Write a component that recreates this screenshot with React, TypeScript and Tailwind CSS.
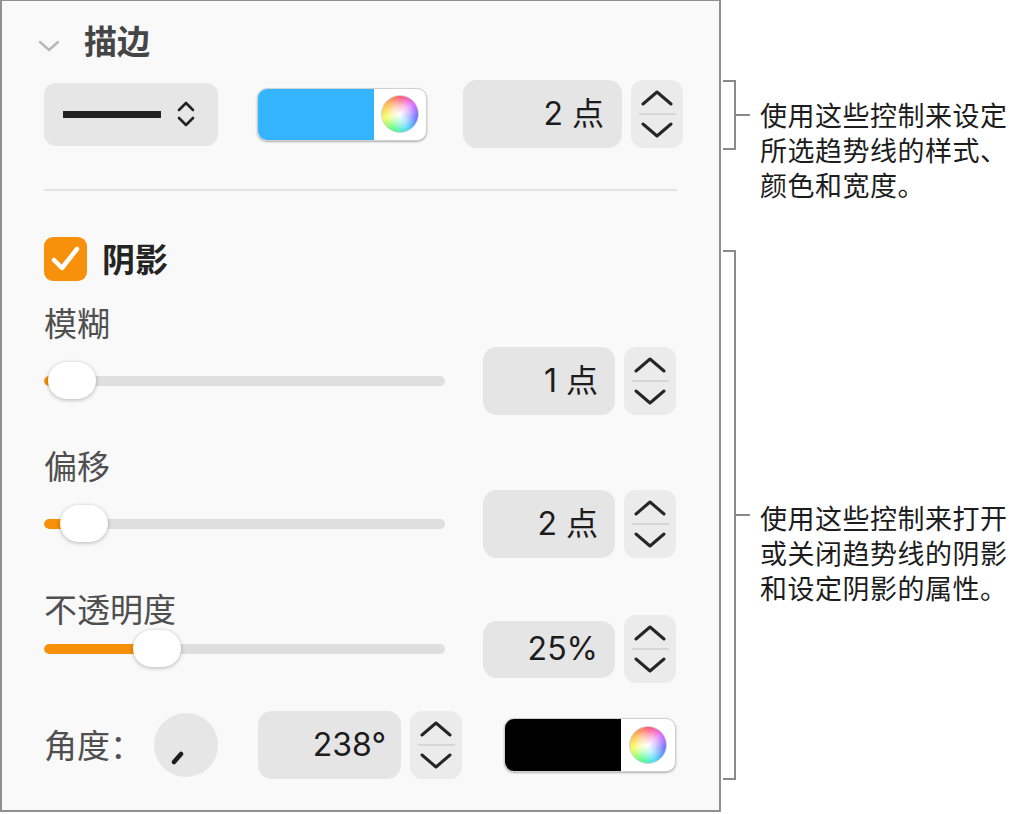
import React from "react";

const cjk = "font-['Noto_Sans_CJK_SC',sans-serif]";
const num = "font-['Inter','Noto_Sans_CJK_SC',sans-serif]";

const Stepper: React.FC<{ className?: string }> = ({ className = "" }) => (
  <div
    className={`w-[52px] h-[68px] shrink-0 rounded-[12px] bg-[#ebebeb] flex flex-col items-center justify-center gap-[7px] ${className}`}
  >
    <svg width="34" height="17" viewBox="0 0 34 17">
      <path d="M3 15 L17 3 L31 15" fill="none" stroke="#262626" strokeWidth="3" strokeLinecap="round" strokeLinejoin="round" />
    </svg>
    <div className="w-[37px] h-[2px] bg-[#d6d6d6]" />
    <svg width="34" height="17" viewBox="0 0 34 17">
      <path d="M3 2 L17 14 L31 2" fill="none" stroke="#262626" strokeWidth="3" strokeLinecap="round" strokeLinejoin="round" />
    </svg>
  </div>
);

const Field: React.FC<{ value: string; className: string }> = ({ value, className }) => (
  <div
    className={`shrink-0 rounded-[14px] bg-[#e5e5e5] flex items-center justify-end text-[32px] text-[#1c1c1c] ${num} ${className}`}
  >
    {value}
  </div>
);

const Wheel: React.FC = () => (
  <div className="w-[38px] h-[38px] rounded-full border border-[#d4d4d4] bg-[image:radial-gradient(circle,#ffffff_0%,rgba(255,255,255,0.6)_35%,rgba(255,255,255,0)_72%),conic-gradient(from_0deg,#ff4d6a,#e05cff,#5a6bff,#3fd6ff,#4dff7a,#f4ff4a,#ffb03a,#ff4d6a)]" />
);

const ColorWell: React.FC<{ color: string; className: string }> = ({ color, className }) => (
  <div
    className={`flex shrink-0 rounded-[10px] overflow-hidden bg-white border border-[#d0d0d0] shadow-[0_1px_2px_rgba(0,0,0,0.3)] ${className}`}
  >
    <div className={`w-[116px] h-full ${color}`} />
    <div className="flex-1 flex items-center justify-center">
      <Wheel />
    </div>
  </div>
);

const Slider: React.FC<{ fill: string; thumb: string }> = ({ fill, thumb }) => (
  <div className="relative w-[401px] h-[40px] shrink-0 flex items-center">
    <div className="w-full h-[10px] rounded-full bg-[#dfdfdf] overflow-hidden">
      <div className={`h-full rounded-full bg-[#f68f0a] ${fill}`} />
    </div>
    <div
      className={`absolute top-[1px] w-[48px] h-[37px] rounded-full bg-white shadow-[0_1px_4px_rgba(0,0,0,0.28)] ${thumb}`}
    />
  </div>
);

const SliderRow: React.FC<{ fill: string; thumb: string; value: string; fieldH: string; mt: string }> = ({
  fill,
  thumb,
  value,
  fieldH,
  mt,
}) => (
  <div className={`flex items-center h-[68px] ${mt}`}>
    <Slider fill={fill} thumb={thumb} />
    <Field value={value} className={`ml-[38px] w-[132px] pr-[17px] ${fieldH}`} />
    <Stepper className="ml-[9px]" />
  </div>
);

const Label: React.FC<{ text: string; className: string }> = ({ text, className }) => (
  <div className={`text-[33px] leading-[34px] text-[#4f4f4f] ${cjk} ${className}`}>{text}</div>
);

const Note: React.FC<{ lines: string[] }> = ({ lines }) => (
  <div className={`ml-[10px] text-[27px] leading-[35px] tracking-[0.5px] text-[#1d1d1d] whitespace-nowrap ${cjk}`}>
    {lines.map((l) => (
      <div key={l}>{l}</div>
    ))}
  </div>
);

export default function App() {
  return (
    <div className="flex w-[1021px] h-[814px] bg-white">
      {/* Inspector panel */}
      <div className="w-[721px] h-[812px] shrink-0 border-2 border-t border-[#8f8f8f] bg-[#f9f9f9] flex flex-col pl-[42px]">
        {/* Stroke header */}
        <div className="h-[79px] flex items-center">
          <svg width="22" height="12" viewBox="0 0 22 12" className="-ml-[6px] mt-[11px]">
            <path d="M2 2 L11 10 L20 2" fill="none" stroke="#b8b8b8" strokeWidth="2.5" strokeLinecap="round" strokeLinejoin="round" />
          </svg>
          <span className={`ml-[24px] text-[33px] font-bold text-[#454545] ${cjk}`}>描边</span>
        </div>

        {/* Stroke controls */}
        <div className="h-[68px] flex items-center">
          <div className="w-[174px] h-[63px] shrink-0 rounded-[12px] bg-[#e6e6e6] flex items-center pl-[19px]">
            <div className="w-[98px] h-[7px] bg-[#222]" />
            <svg width="20" height="28" viewBox="0 0 20 28" className="ml-[15px]">
              <path d="M3 10 L10 3 L17 10" fill="none" stroke="#222" strokeWidth="2.6" strokeLinecap="round" strokeLinejoin="round" />
              <path d="M3 18 L10 25 L17 18" fill="none" stroke="#222" strokeWidth="2.6" strokeLinecap="round" strokeLinejoin="round" />
            </svg>
          </div>
          <ColorWell color="bg-[#35b4fe]" className="ml-[39px] w-[170px] h-[53px]" />
          <Field value="2 点" className="ml-[36px] w-[159px] h-[68px] pr-[18px]" />
          <Stepper className="ml-[9px]" />
        </div>

        <div className="mt-[41px] w-[633px] h-[2px] bg-[#e3e3e3]" />

        {/* Shadow toggle */}
        <div className="mt-[46px] h-[44px] flex items-center">
          <div className="w-[43px] h-[44px] rounded-[9px] bg-[#f7900b]">
            <svg width="43" height="44" viewBox="0 0 43 44">
              <path d="M10 23 L18 31 L33 12" fill="none" stroke="#fff" strokeWidth="4.5" strokeLinecap="round" strokeLinejoin="round" />
            </svg>
          </div>
          <span className={`ml-[15px] text-[33px] font-bold text-[#242424] ${cjk}`}>阴影</span>
        </div>

        <Label text="模糊" className="mt-[24px] h-[34px]" />
        <SliderRow fill="w-[10px]" thumb="left-[4px]" value="1 点" fieldH="h-[68px]" mt="mt-[8px]" />

        <Label text="偏移" className="mt-[33px] h-[34px]" />
        <SliderRow fill="w-[22px]" thumb="left-[16px]" value="2 点" fieldH="h-[68px]" mt="mt-[8px]" />

        <Label text="不透明度" className="mt-[33px] h-[24px]" />
        <SliderRow fill="w-[100px]" thumb="left-[89px]" value="25%" fieldH="h-[57px]" mt="mt-0" />

        {/* Angle */}
        <div className="mt-[28px] h-[68px] flex items-center">
          <span className={`w-[110px] shrink-0 text-[33px] text-[#4f4f4f] ${cjk}`}>角度：</span>
          <div className="w-[64px] h-[64px] shrink-0 rounded-full bg-[#e6e6e6]">
            <svg width="64" height="64" viewBox="0 0 64 64">
              <path d="M20 49 L27 41" stroke="#1e1e1e" strokeWidth="4.5" strokeLinecap="round" />
            </svg>
          </div>
          <Field value="238°" className="ml-[40px] w-[143px] h-[68px] pr-[15px]" />
          <Stepper className="ml-[9px]" />
          <ColorWell color="bg-black" className="ml-[42px] w-[172px] h-[54px]" />
        </div>
      </div>

      {/* Callouts */}
      <div className="flex flex-col ml-[2px]">
        <div className="mt-[80px] h-[70px] flex items-start">
          <div className="h-full flex items-center">
            <div className="w-[13px] h-full border-y-2 border-r-2 border-[#8a8a8a]" />
            <div className="w-[14px] h-[2px] bg-[#8a8a8a]" />
          </div>
          <div className="mt-[17px]">
            <Note lines={["使用这些控制来设定", "所选趋势线的样式、", "颜色和宽度。"]} />
          </div>
        </div>
        <div className="mt-[100px] h-[530px] flex items-start">
          <div className="h-full flex items-center">
            <div className="w-[13px] h-full border-y-2 border-r-2 border-[#8a8a8a]" />
            <div className="w-[14px] h-[2px] bg-[#8a8a8a]" />
          </div>
          <div className="mt-[250px]">
            <Note lines={["使用这些控制来打开", "或关闭趋势线的阴影", "和设定阴影的属性。"]} />
          </div>
        </div>
      </div>
    </div>
  );
}
